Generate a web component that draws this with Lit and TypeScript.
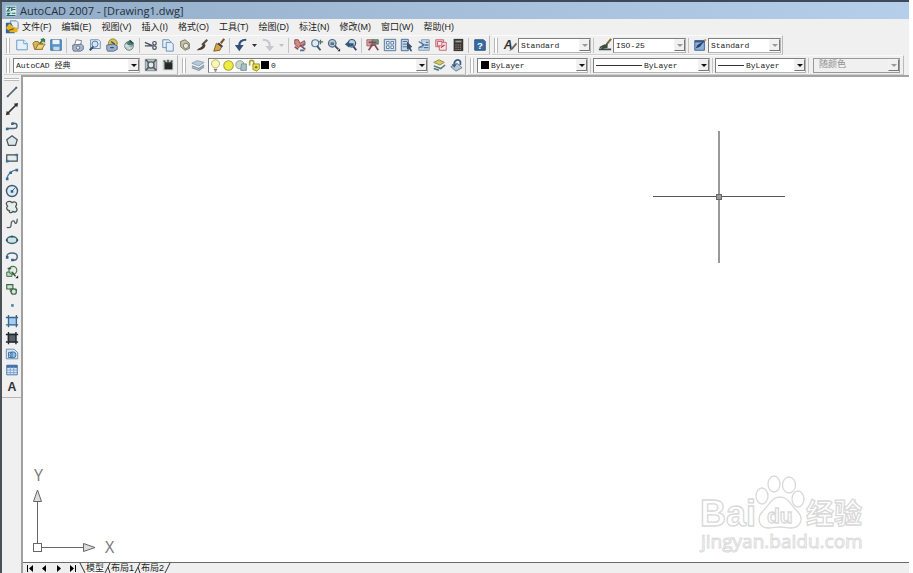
import { LitElement, html, svg, css, nothing, TemplateResult } from "lit";
import { customElement, property } from "lit/decorators.js";

const I: Record<string, TemplateResult> = {
  app: svg`<path d="M1 1h14v14H1z" fill="#dfe9ea"/><path d="M2 3h5l-4 5h4M9 3h5M9 6h5M9 3v5M2 11h4l-3 3h11M9 11h5" stroke="#1c6b68" stroke-width="1.6" fill="none"/>`,
  doc: svg`<path d="M6 1h7l2 2v7H6z" fill="#e8eef6" stroke="#5f7ea8"/><path d="M1 3h6l4 8v4H1z" fill="#2f62a5"/><path d="M1 9l4-5 5 4 5 1-1 5H6z" fill="#e3b422"/><path d="M4 12l6-2" stroke="#6d4a10" stroke-width="1.5"/>`,
  new: svg`<path d="M2 2.5h8l4 4v7H2z" fill="#e6f1fb" stroke="#5f8fbf"/><path d="M10 2.5v4h4" fill="#fff" stroke="#5f8fbf"/>`,
  open: svg`<path d="M1 6l2-2h4l1 2h4v7H3z" fill="#d9b455" stroke="#8c6a2a"/><path d="M4 13l3-6h8l-4 6z" fill="#efd27c" stroke="#8c6a2a"/><path d="M9 6l5-5M14 1v4M14 1l-4 1" stroke="#3d7d45" stroke-width="2" fill="none"/>`,
  save: svg`<path d="M2 2h12v12H2z" fill="#5b97c9" stroke="#2f6797"/><path d="M4 2h8v5H4z" fill="#e8f3fb"/><path d="M5 10h7v4H5z" fill="#c5dbea"/>`,
  print: svg`<path d="M4 8l2-6 6 1-1 5" fill="#fff" stroke="#66758b"/><path d="M2 8l10-1 2 2v4l-3 2H3l-1-2z" fill="#a9b7c8" stroke="#596b84"/><circle cx="8" cy="11" r="2" fill="#e9edf3" stroke="#596b84"/>`,
  preview: svg`<path d="M3 2h9l2 2v8H3z" fill="#edf4fb" stroke="#5c83ac"/><circle cx="8" cy="7" r="3.5" fill="#d2e4f5" stroke="#476c96"/><path d="M6 10l-4 4" stroke="#32547f" stroke-width="2.4"/>`,
  publish: svg`<circle cx="9" cy="6" r="5" fill="#d8c550" stroke="#887a29"/><path d="M2 8l8-1 4 2v4l-4 2H3l-1-2z" fill="#9fb2c9" stroke="#4b6286"/><path d="M7 4l4 3M6 11h4" stroke="#324f79" stroke-width="1.6"/>`,
  globe: svg`<circle cx="8" cy="9" r="5" fill="#c1cfd0" stroke="#617778"/><path d="M5 6l4-4 5 4-4 5z" fill="#4a7c72"/><path d="M3 9h8M8 13l2-3" stroke="#e9efef"/><path d="M9 3l3 3" stroke="#2a4a68" stroke-width="2"/>`,
  cut: svg`<path d="M1 5l9 4M1 9h9" stroke="#454f5c" stroke-width="1.7"/><circle cx="12" cy="6" r="2" fill="none" stroke="#454f5c" stroke-width="1.4"/><circle cx="12" cy="11" r="2" fill="none" stroke="#454f5c" stroke-width="1.4"/>`,
  copy: svg`<path d="M2 2h7l2 2v7H2z" fill="#e4effa" stroke="#5b86b4"/><path d="M6 5h6l2 2v8H6z" fill="#e4effa" stroke="#5b86b4"/>`,
  paste: svg`<path d="M3 4l5-2 5 4v6l-5 2-5-4z" fill="#c6c3a1" stroke="#75704c"/><circle cx="9" cy="9" r="3" fill="#eceadd" stroke="#6b7076"/>`,
  match: svg`<path d="M14 2L8 8" stroke="#5a4a3a" stroke-width="2.2"/><path d="M10 6c-2 6-5 4-8 8 5 0 9-1 10-6z" fill="#4e3a2e"/>`,
  brush: svg`<path d="M14 1l-4 5" stroke="#7a5326" stroke-width="2.4"/><path d="M5 6l6 4-2 4-7 1z" fill="#dba53e" stroke="#7a5326"/><path d="M7 6l5 4" stroke="#30425e" stroke-width="2"/>`,
  undo: svg`<path d="M14 2C9 2 6 4 6 9" fill="none" stroke="#2f4f78" stroke-width="2.5"/><path d="M1 8h10l-5 7z" fill="#2f4f78"/>`,
  redo: svg`<path d="M2 2c5 0 8 2 8 7" fill="none" stroke="#c4c7cb" stroke-width="2.2"/><path d="M5 9h10l-5 6z" fill="#c4c7cb"/>`,
  pan: svg`<path d="M2 2h4l2 4 5-3 1 3-5 3-3 2-4-4z" fill="#cf8a87" stroke="#85464a"/><path d="M8 8l6 5M2 10l4 3" stroke="#9a4e53" stroke-width="2"/><path d="M8 14h5M11 9l3-2" stroke="#4b719d" stroke-width="2"/>`,
  zoom: svg`<circle cx="6" cy="6" r="4" fill="#dcebf5" stroke="#5d7890" stroke-width="1.4"/><path d="M8 9l4 5" stroke="#405a73" stroke-width="2.2"/><path d="M12 2v5M10 4.500h5" stroke="#51715d" stroke-width="1.4"/>`,
  zoomwin: svg`<circle cx="6" cy="6" r="4.300" fill="#b7c8d5" stroke="#50677d" stroke-width="1.4"/><path d="M4 5h4v3H4z" fill="#57718b"/><path d="M9 9l4 4" stroke="#3a536b" stroke-width="2.2"/><path d="M12 15h3v-3z" fill="#222"/>`,
  zoomprev: svg`<circle cx="9" cy="6" r="4.300" fill="#bed1df" stroke="#40596f" stroke-width="1.4"/><path d="M11 10l3 4" stroke="#34495e" stroke-width="2.2"/><path d="M1 7l5-4v3h5v3H6v2z" fill="#31587f"/>`,
  props: svg`<path d="M1 2h7v7H1z" fill="#d9a3aa" stroke="#9a5c63"/><path d="M7 2h7v5H7z" fill="#7da08a" stroke="#496b58"/><path d="M3 5h9M5 8h6M3 14l4-6M10 8l4 6" stroke="#884655" stroke-width="1.8"/>`,
  dc: svg`<path d="M1.500 1.500h13v13h-13z" fill="#d4e2ef" stroke="#4f6e8e"/><path d="M4 4h3v3H4zM9 4h3v3H9zM4 9h3v3H4zM9 9h3v3H9z" fill="#fff" stroke="#54779c"/>`,
  palette: svg`<path d="M1.500 1.500h8v13h-8z" fill="#c4d7e9" stroke="#40668f"/><path d="M3 4h5M3 7h5M3 10h5" stroke="#40668f"/><path d="M8 4l6 6-2 1 2 4-2 0-2-3-2 1z" fill="#3a5069"/>`,
  sheet: svg`<path d="M5 2h9v12H2v-3h5z" fill="#ccdbea" stroke="#7792ac"/><path d="M2 4l6 4-6 3M10 5h3M9 8h4M8 11h5" stroke="#4a709b" stroke-width="1.500" fill="none"/>`,
  markup: svg`<path d="M2 2h9v8H2z" fill="#f2c7ce" stroke="#c4596b"/><path d="M6 5h8v9H6z" fill="#f9e3e5" stroke="#c4596b"/><path d="M4 4h5v5H4z" fill="#f9e3e5" stroke="#c4596b"/><path d="M8 11l4-3" stroke="#b13b50" fill="none" stroke-width="1.400"/>`,
  calc: svg`<path d="M3 1h11v14H3z" fill="#3b3634"/><path d="M5 3h7v2H5z" fill="#8ea393"/><path d="M5 8h7M5 10.500h7M5 13h7" stroke="#b49587" stroke-dasharray="1.500 1"/>`,
  help: svg`<path d="M2 2h10l2 2v10H2z" fill="#376da1" stroke="#1f4a78"/><text x="8" y="12" text-anchor="middle" font-size="11" font-weight="700" font-family="Liberation Sans, sans-serif" fill="#fff">?</text>`,
  tstyle: svg`<text x="6" y="12" text-anchor="middle" font-size="14" font-weight="700" font-style="italic" font-family="Liberation Sans, sans-serif" fill="#333">A</text><path d="M15 5l-6 7-2 3 4-2 5-6z" fill="#666"/>`,
  dstyle: svg`<path d="M1 13h14M2 11l6-3" stroke="#3b4c3f" stroke-width="1.800"/><path d="M15 1l-5 6" stroke="#806d39" stroke-width="2.400"/><path d="M11 6l-6 3-2 4 8-2z" fill="#3d4a41"/>`,
  tbstyle: svg`<path d="M2 3h11v11H2z" fill="#8fb0d6" stroke="#33598b"/><path d="M2 4h11" stroke="#33598b" stroke-width="2"/><path d="M13 3L8 10l-5 2 2-4z" fill="#27426a"/><path d="M12 2l3-1v3" fill="#d68a46"/>`,
  gear: svg`<path d="M1.500 1.500h13v13h-13z" fill="#bdc7c9" stroke="#7b888c"/><circle cx="8" cy="8" r="3.500" fill="#e5e9ea" stroke="#4d5b60" stroke-width="1.500"/><path d="M2 2l3 3M14 2l-3 3M2 14l3-3M14 14l-3-3" stroke="#4d5b60" stroke-width="1.800"/>`,
  myws: svg`<path d="M2 2h12v12H2z" fill="#c4cac9"/><path d="M4 5h9v8H4z" fill="#222826"/><path d="M3 3l3 3M13 3l-3 3M8 2v4" stroke="#39423f" stroke-width="1.500"/>`,
  layers: svg`<path d="M1 6l6-3 8 2-6 4z" fill="#b8cada" stroke="#8aa0b5"/><path d="M1 9l8 3 6-4M1 11l8 3 6-4" fill="none" stroke="#8299ae" stroke-width="1.400"/>`,
  bulb: svg`<path d="M8 1c-3 0-5 2-5 5 0 2 2 3 3 5h4c1-2 3-3 3-5 0-3-2-5-5-5z" fill="#fbf7b4" stroke="#a9a455"/><path d="M6 13h4M7 15h2" stroke="#777" stroke-width="1.500"/>`,
  sun: svg`<circle cx="8" cy="8" r="6.500" fill="#a9a62d"/><circle cx="8" cy="8" r="5.200" fill="#f0ea46"/>`,
  vpsun: svg`<circle cx="6" cy="7" r="5" fill="#c9d8cb" stroke="#7e9187"/><path d="M8 6h6v8H7z" fill="#a8c1c6" stroke="#6f898e"/>`,
  lock: svg`<path d="M2 8V4c0-3 5-3 5 0v4" fill="none" stroke="#aaa326" stroke-width="2"/><path d="M6 6h8v6l-3 3-5-2z" fill="#e6dc4c" stroke="#8b851f"/><circle cx="10" cy="10" r="1.500" fill="#7b751e"/>`,
  lcur: svg`<path d="M2 5l6-3 6 3-5 3z" fill="#d7ca62" stroke="#8b853d"/><path d="M2 9l8 3 5-4M2 12l6 2" fill="none" stroke="#51787b" stroke-width="1.800"/>`,
  lprev: svg`<path d="M2 10l7-4 6 5-7 4z" fill="#b9c9d8" stroke="#5b7590"/><path d="M6 7c0-5 5-6 7-3v4" fill="none" stroke="#3a5f87" stroke-width="2"/><path d="M3 7h6l-3 4z" fill="#3a5f87"/>`,
  line: svg`<path d="M3 13L13 3" stroke="#54606d" stroke-width="1.700"/><path d="M2 12h2v2H2zM12 2h2v2h-2z" fill="#2f5f88"/>`,
  xline: svg`<path d="M3 13L13 3" stroke="#333" stroke-width="1.700"/><path d="M1 15l1-5 4 4zM15 1l-5 1 4 4z" fill="#333"/>`,
  pline: svg`<path d="M2 12h8c5 0 5-6 0-6H8" fill="none" stroke="#4d6274" stroke-width="1.500"/><path d="M1 11h3v3H1zM7 5h3v3H7z" fill="#2c6b8c"/>`,
  poly: svg`<path d="M8 2l6 4.500L12 13H4L2 6.500z" fill="#dde6ea" stroke="#4b545b" stroke-width="1.400"/>`,
  rect: svg`<path d="M2 4.500h12v7H2z" fill="#e4ecef" stroke="#3f4f58" stroke-width="1.400"/><path d="M1 10h3v3H1zM12 3h3v3h-3z" fill="#3d7590"/>`,
  arc: svg`<path d="M2 14C3 8 7 4 14 3" fill="none" stroke="#56738c" stroke-width="1.600"/><path d="M1 12h3v3H1zM5 5h3v3H5zM12 2h3v3h-3z" fill="#2f6b99"/>`,
  circle: svg`<circle cx="8" cy="8" r="6.300" fill="#dceaf4" stroke="#3c5972" stroke-width="1.600"/><path d="M8 8l4-4" stroke="#3c5972"/><path d="M6.500 7h3v3h-3z" fill="#255f98"/>`,
  cloud: svg`<path d="M3 2c2-1 4 0 5 1 3-2 6 0 5 3-1 1-1 2 0 3 2 3-1 6-4 4-2 3-5 1-4-1-3 0-4-3-2-5-2-2-2-4 0-5z" fill="#e6eded" stroke="#44514f" stroke-width="1.400"/>`,
  spline: svg`<path d="M2 13c5 1 5-1 5-4s3-5 4-2 3 1 3-4" fill="none" stroke="#555d66" stroke-width="1.500"/>`,
  ellipse: svg`<ellipse cx="8" cy="8" rx="6" ry="4" fill="#cfe2e5" stroke="#316571" stroke-width="1.700"/><path d="M1 7h2v2H1zM13 7h2v2h-2zM7 3h2v2H7z" fill="#25525e"/>`,
  earc: svg`<path d="M2 9c0-6 12-6 12 0 0 3-3 4-6 4" fill="none" stroke="#4a6580" stroke-width="1.600"/><path d="M1 8h3v3H1zM7 11h3v3H7z" fill="#2f6089"/>`,
  insert: svg`<path d="M2 8h6v5H2z" fill="#c0d7c2" stroke="#386044"/><circle cx="9" cy="6" r="4.500" fill="#d9e8d9" fill-opacity=".6" stroke="#4a7555" stroke-width="1.300"/><path d="M8 8l4 5M3 4h4" stroke="#2f5a3c" stroke-width="1.800"/><path d="M12 15h3v-3z" fill="#111"/>`,
  block: svg`<path d="M2 3h7v5H2z" fill="#cfe1cf" stroke="#3d6547" stroke-width="1.300"/><path d="M6 8h7v3H6z" fill="#9fbba3" stroke="#3d6547"/><circle cx="10" cy="11" r="3" fill="#d7e5d7" stroke="#3d6547" stroke-width="1.300"/>`,
  point: svg`<path d="M7 7h3v3H7z" fill="#5482a4"/>`,
  hatch: svg`<path d="M4 4h9v9H4z" fill="#a7ccec"/><path d="M4 1v14M13 1v14M1 4h14M1 12.500h14" stroke="#356590" stroke-width="1.500"/>`,
  grad: svg`<path d="M3 3h10v10H3z" fill="#5b6166"/><path d="M4 1v14M12.500 1v14M1 4h14M1 12.500h14" stroke="#22282d" stroke-width="1.600"/>`,
  region: svg`<path d="M1.500 2.500h9l4 4v7h-13z" fill="#d9e8f5" stroke="#5886b1"/><circle cx="9" cy="9" r="3.500" fill="#96bddf" stroke="#37699b"/><path d="M4 6h4v6H4z" fill="none" stroke="#37699b"/>`,
  table: svg`<path d="M2 2.500h12v11H2z" fill="#d9e8f7" stroke="#3e6ca6"/><path d="M2 4h12" stroke="#3e6ca6" stroke-width="3"/><path d="M2 8h12M2 11h12M6 4v9M10 4v9" stroke="#7ba0cc"/>`,
  mtext: svg`<text x="8" y="13" text-anchor="middle" font-size="14" font-weight="700" font-family="Liberation Sans, sans-serif" fill="#333">A</text>`,
};

const icon = (n: string) => html`<svg class="ico" viewBox="0 0 16 16" aria-hidden="true">${I[n]}</svg>`;
const btn = (n: string, label: string) => html`<button class="tool" aria-label=${label}>${icon(n)}</button>`;
const caret = (off = false) =>
  html`<button class="caret" aria-label="更多" ?disabled=${off}><svg viewBox="0 0 5 3"><path d="M0 0h5L2.500 3z" fill=${off ? "#c0c0c0" : "#333"}/></svg></button>`;
const grip = html`<span class="grip"></span>`;
const sep = html`<span class="sep"></span>`;

@customElement("cad-combo")
export class CadCombo extends LitElement {
  @property() value = "";
  @property() label = "";
  @property() lead = "";
  @property({ type: Boolean }) dim = false;
  @property({ type: Boolean }) off = false;

  static styles = css`
    :host { display: block; min-width: 0; }
    .box {
      display: flex; align-items: center; box-sizing: border-box; height: 15px;
      background: #fff; border: 1px solid #7f7f7f; border-right-color: #b4b4b4; border-bottom-color: #b4b4b4;
    }
    .box.off { background: #f0f0f0; border-color: #999; }
    select {
      appearance: none; flex: 1; min-width: 0; height: 13px; margin: 0; padding: 0 0 0 2px; border: 0;
      background: none; color: #222; font: 8px/13px "Liberation Mono", "Noto Sans CJK SC", monospace; outline: none;
      opacity: 1;
    }
    .off select { color: #8f8f8f; padding-left: 5px; font-size: 9px; }
    .arrow {
      display: flex; align-items: center; justify-content: center; flex: none; box-sizing: border-box;
      width: 11px; height: 12px; background: #f0f0f0; border: 1px solid #f4f4f4;
      border-right-color: #777; border-bottom-color: #777;
    }
    .arrow svg { width: 6px; height: 3px; }
    .swatch { flex: none; width: 8px; height: 8px; margin: 0 0 0 3px; background: #000; }
    .rule { flex: 1; height: 1px; margin: 0 0 0 2px; background: #333; }
    .rule + select { flex: 0 0 auto; width: 56px; }
    .rule.short + select { width: 50px; }
    slot { display: contents; }
  `;

  render() {
    const c = this.dim || this.off ? "#999" : "#111";
    return html`<label class="box ${this.off ? "off" : ""}">
      <slot></slot>
      ${this.lead === "swatch" ? html`<span class="swatch"></span>` : nothing}
      ${this.lead === "rule" || this.lead === "short" ? html`<span class="rule ${this.lead}"></span>` : nothing}
      <select aria-label=${this.label} ?disabled=${this.off}><option>${this.value}</option></select>
      <span class="arrow"><svg viewBox="0 0 6 3"><path d="M0 0h6L3 3z" fill=${c}/></svg></span>
    </label>`;
  }
}

@customElement("app-root")
export class AppRoot extends LitElement {
  static styles = css`
    :host {
      display: flex; flex-direction: column; box-sizing: border-box; min-height: 100vh; padding-right: 4px;
      background: #fff; color: #222; font-family: "Liberation Sans", "Noto Sans CJK SC", sans-serif;
    }
    button { margin: 0; padding: 0; border: 0; background: none; color: inherit; font: inherit; }
    .window {
      flex: 1; display: flex; flex-direction: column; background: #f0f0f0;
      border-top: 2px solid #3d4955; border-left: 2px solid #4b5157;
    }
    .title {
      display: flex; align-items: center; gap: 3px; height: 17px; padding-left: 3px;
      background: linear-gradient(90deg, #91acc6, #a2bcd8 40%, #b5cfea);
    }
    .title h1 { margin: 0; font: 11px/17px "Open Sans", sans-serif; color: #24303c; white-space: nowrap; }
    .title .ico { width: 12px; height: 12px; }
    .ico { display: block; width: 14px; height: 14px; flex: none; }
    .menu { display: flex; align-items: center; height: 16px; padding-left: 3px; }
    .menu .ico { margin-right: 3px; }
    .menu nav { display: flex; gap: 10px; }
    .menu button { font-size: 9px; line-height: 16px; white-space: nowrap; }
    .row { display: flex; gap: 2px; height: 20px; padding-left: 2px; }
    .bar {
      display: flex; align-items: center; box-sizing: border-box; height: 20px; padding-right: 1px;
      border-top: 1px solid #fafafa; border-bottom: 1px solid #cfcfcf; border-right: 1px solid #b9b9b9;
    }
    .grip {
      flex: none; width: 2px; height: 15px; margin: 0 3px 0 2px;
      border-left: 1px solid #b8b8b8; border-right: 1px solid #b8b8b8; background: #fff;
    }
    .sep { flex: none; width: 1px; height: 15px; margin: 0 2px; background: #c4c4c4; }
    .tool { display: flex; align-items: center; justify-content: center; flex: none; width: 17px; height: 16px; }
    .caret { display: flex; align-items: center; justify-content: center; width: 10px; height: 16px; }
    .caret svg { width: 5px; height: 3px; }
    .w73 { width: 73px; }
    .ws { width: 127px; margin-right: 2px; }
    .layer { width: 220px; margin: 0 2px; }
    .color { width: 111px; }
    .ltype { width: 117px; }
    .lweight { width: 91px; }
    .plot { width: 87px; margin: 0 2px; }
    .states { display: flex; align-items: center; }
    .states .ico { width: 13px; height: 13px; }
    .states .black { width: 8px; height: 8px; background: #000; }
    .main { flex: 1; display: flex; }
    .side { flex: none; width: 19px; }
    .draw {
      display: flex; flex-direction: column; align-items: center; height: 323px; box-sizing: border-box;
      padding: 3px 0 2px; border-bottom: 1px solid #b5b5b5; justify-content: space-between;
    }
    .draw .hgrip { width: 15px; height: 1px; margin-bottom: 3px; border-top: 1px solid #bbb; border-bottom: 1px solid #bbb; background: #fff; }
    .draw .tool { width: 19px; }
    .work { flex: 1; min-width: 0; display: flex; flex-direction: column; border-left: 2px solid #a0a0a0; border-top: 2px solid #a3a3a3; }
    .canvas { flex: 1; position: relative; background: #fff; overflow: hidden; }
    .cross { position: absolute; left: 630px; top: 54px; width: 132px; height: 132px; }
    .ucs { position: absolute; left: 8px; bottom: 8px; width: 90px; height: 100px; }
    .mark { position: absolute; right: 37px; bottom: 2px; width: 176px; height: 90px; }
    .tabs {
      display: flex; align-items: center; height: 10px; overflow: hidden; border-top: 1px solid #6a6a6a;
      background: #efefef; font-size: 9px; line-height: 10px;
    }
    .tabs .nav { display: flex; justify-content: center; width: 14px; }
    .tabs .nav svg { width: 7px; height: 7px; }
    .tabs .slash { width: 7px; height: 10px; flex: none; }
    .tabs .tab { line-height: 10px; white-space: nowrap; }
    .tabs .sel { background: #fff; }
  `;

  render() {
    const menus = ["文件(F)", "编辑(E)", "视图(V)", "插入(I)", "格式(O)", "工具(T)", "绘图(D)", "标注(N)", "修改(M)", "窗口(W)", "帮助(H)"];
    const tools: [string, string][] = [
      ["line", "直线"], ["xline", "构造线"], ["pline", "多段线"], ["poly", "正多边形"], ["rect", "矩形"], ["arc", "圆弧"],
      ["circle", "圆"], ["cloud", "修订云线"], ["spline", "样条曲线"], ["ellipse", "椭圆"], ["earc", "椭圆弧"],
      ["insert", "插入块"], ["block", "创建块"], ["point", "点"], ["hatch", "图案填充"], ["grad", "渐变色"],
      ["region", "面域"], ["table", "表格"], ["mtext", "多行文字"],
    ];
    return html`
      <div class="window">
        <header class="title">${icon("app")}<h1>AutoCAD 2007 - [Drawing1.dwg]</h1></header>
        <div class="menu">${icon("doc")}<nav>${menus.map((m) => html`<button>${m}</button>`)}</nav></div>
        <div class="row">
          <div class="bar">
            ${grip}${btn("new", "新建")}${btn("open", "打开")}${btn("save", "保存")}${sep}
            ${btn("print", "打印")}${btn("preview", "打印预览")}${btn("publish", "发布")}${btn("globe", "三维 DWF")}${sep}
            ${btn("cut", "剪切")}${btn("copy", "复制")}${btn("paste", "粘贴")}${btn("match", "特性匹配")}${btn("brush", "块编辑器")}${sep}
            ${btn("undo", "放弃")}${caret()}${btn("redo", "重做")}${caret(true)}${sep}
            ${btn("pan", "平移")}${btn("zoom", "缩放")}${btn("zoomwin", "窗口缩放")}${btn("zoomprev", "缩放上一个")}${sep}
            ${btn("props", "特性")}${btn("dc", "设计中心")}${btn("palette", "工具选项板")}${btn("sheet", "图纸集")}${btn("markup", "标记集")}${btn("calc", "计算器")}${sep}
            ${btn("help", "帮助")}
          </div>
          <div class="bar">
            ${grip}${btn("tstyle", "文字样式")}<cad-combo class="w73" label="文字样式" value="Standard" dim></cad-combo>${sep}
            ${btn("dstyle", "标注样式")}<cad-combo class="w73" label="标注样式" value="ISO-25" dim></cad-combo>${sep}
            ${btn("tbstyle", "表格样式")}<cad-combo class="w73" label="表格样式" value="Standard" dim></cad-combo>
          </div>
        </div>
        <div class="row">
          <div class="bar">
            ${grip}<cad-combo class="ws" label="工作空间" value="AutoCAD 经典"></cad-combo>
            ${btn("gear", "工作空间设置")}${btn("myws", "我的工作空间")}
          </div>
          <div class="bar">
            ${grip}${btn("layers", "图层特性")}
            <cad-combo class="layer" label="图层" value="0">
              <span class="states">${icon("bulb")}${icon("sun")}${icon("vpsun")}${icon("lock")}<span class="black"></span></span>
            </cad-combo>
            ${btn("lcur", "置为当前图层")}${btn("lprev", "上一个图层")}
          </div>
          <div class="bar">
            ${grip}<cad-combo class="color" label="颜色" lead="swatch" value="ByLayer"></cad-combo>${sep}
            <cad-combo class="ltype" label="线型" lead="rule" value="ByLayer"></cad-combo>${sep}
            <cad-combo class="lweight" label="线宽" lead="short" value="ByLayer"></cad-combo>${sep}
            <cad-combo class="plot" label="打印样式" value="随颜色" off></cad-combo>
          </div>
        </div>
        <div class="main">
          <aside class="side">
            <div class="draw"><span class="hgrip"></span>${tools.map(([n, l]) => btn(n, l))}</div>
          </aside>
          <div class="work">
            <div class="canvas">
              <svg class="cross" viewBox="0 0 132 132">
                <path d="M66 0v132" stroke="#999" stroke-width="2"/>
                <path d="M0 65.500h132" stroke="#555"/>
                <rect x="63.500" y="63.500" width="5" height="5" fill="#999" stroke="#666"/>
              </svg>
              <svg class="ucs" viewBox="0 0 90 100">
                <g fill="none" stroke="#666">
                  <path d="M6.500 89V48M11 93.500h42"/>
                  <path d="M2.500 47.500h8L6.500 36z" fill="#ddd"/>
                  <path d="M52.500 89.500v8L64 93.500z" fill="#ddd"/>
                  <rect x="2.500" y="89.500" width="8" height="8" fill="#fff"/>
                </g>
                <text x="74" y="99" font-size="16" fill="#777" font-family="Open Sans, sans-serif">X</text>
                <text x="3" y="27" font-size="16" fill="#777" font-family="Open Sans, sans-serif">Y</text>
              </svg>
              <svg class="mark" viewBox="0 0 176 90">
                <g fill="#fff" stroke="#d9d9d9" stroke-width="1.300">
                  <text x="4" y="56" font-size="36" font-weight="700" font-family="Liberation Sans, sans-serif">Bai</text>
                  <ellipse cx="66" cy="26" rx="6" ry="8"/>
                  <ellipse cx="78" cy="14" rx="6" ry="8"/>
                  <ellipse cx="93" cy="15" rx="6.500" ry="8"/>
                  <ellipse cx="102" cy="29" rx="6" ry="8"/>
                  <path d="M84 27c8 0 11 8 17 14 8 8 3 17-6 17-5 0-7-1-11-1s-7 1-12 1c-9 0-12-10-5-17 6-6 9-14 17-14z"/>
                  <text x="71" y="53" font-size="21" font-weight="700" font-family="Liberation Sans, sans-serif">du</text>
                  <text x="110" y="54" font-size="28" font-weight="700" font-family="Noto Sans CJK SC, sans-serif">经验</text>
                </g>
                <text x="5" y="78" font-size="19" font-family="Open Sans, sans-serif" fill="#fff" stroke="#dcdcdc">jingyan.baidu.com</text>
              </svg>
            </div>
            <div class="tabs">
              <button class="nav" aria-label="第一个"><svg viewBox="0 0 7 7"><path d="M0 0h1v7H0zM6 0v7L2 3.500z"/></svg></button>
              <button class="nav" aria-label="上一个"><svg viewBox="0 0 7 7"><path d="M5 0v7L1 3.500z"/></svg></button>
              <button class="nav" aria-label="下一个"><svg viewBox="0 0 7 7"><path d="M2 0v7l4-3.500z"/></svg></button>
              <button class="nav" aria-label="最后一个"><svg viewBox="0 0 7 7"><path d="M6 0h1v7H6zM1 0v7l4-3.500z"/></svg></button>
              <svg class="slash" viewBox="0 0 7 10"><path d="M1 0l5 10" stroke="#333"/></svg>
              <button class="tab sel">模型</button>
              <svg class="slash" viewBox="0 0 7 10"><path d="M6 0L1 10M4 4l2 6" stroke="#333"/></svg>
              <button class="tab">布局1</button>
              <svg class="slash" viewBox="0 0 7 10"><path d="M6 0L1 10M4 4l2 6" stroke="#333"/></svg>
              <button class="tab">布局2</button>
              <svg class="slash" viewBox="0 0 7 10"><path d="M6 0L1 10" stroke="#333"/></svg>
            </div>
          </div>
        </div>
      </div>`;
  }
}
